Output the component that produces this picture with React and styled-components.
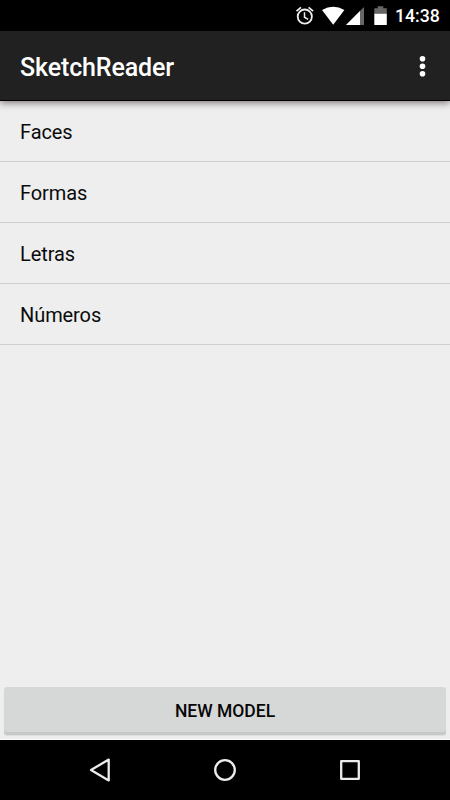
import React from "react";
import styled, { createGlobalStyle } from "styled-components";

const GlobalStyle = createGlobalStyle`
  * { box-sizing: border-box; }
  body { margin: 0; background: #eee; }
`;

const Screen = styled.div`
  display: flex;
  flex-direction: column;
  width: 450px;
  height: 800px;
  overflow: hidden;
  background: #eeeeee;
  color: #0b0b0b;
  font-family: Roboto, "Noto Sans", sans-serif;
`;

const StatusBar = styled.header`
  display: flex;
  justify-content: flex-end;
  flex: 0 0 31px;
  background: #000;
  color: #fff;
`;

const StatusIcons = styled.svg`
  display: block;
  width: 100px;
  height: 31px;
`;

const Clock = styled.time`
  width: 55px;
  padding-top: 1px;
  font-size: 17.7px;
  font-weight: 500;
  line-height: 30px;
  white-space: nowrap;
`;

const AppBar = styled.div`
  z-index: 1;
  display: flex;
  align-items: center;
  justify-content: space-between;
  flex: 0 0 70px;
  padding: 2px 20px 0;
  background: #212121;
  border-bottom: 1px solid #000;
  box-shadow: 0 2px 7px rgba(20, 0, 15, 0.5);
  color: #fff;
`;

const Title = styled.h1`
  margin: 0;
  padding-top: 2px;
  font-size: 25px;
  font-weight: 500;
  letter-spacing: -0.12px;
  line-height: 32px;
`;

const MenuButton = styled.button`
  display: flex;
  width: 15px;
  height: 24px;
  padding: 0;
  border: 0;
  background: none;
`;

const List = styled.ul`
  flex: 1;
  margin: 0;
  padding: 0;
  list-style: none;
`;

const ListItem = styled.li`
  height: 61px;
  padding: 1px 20px 0;
  border-bottom: 1px solid #cfcfcf;
  font-size: 20px;
  letter-spacing: -0.08px;
  line-height: 60px;
`;

const Footer = styled.div`
  flex: 0 0 53px;
  padding: 0 4px;
  border-bottom: 1px solid #fafafa;
`;

const ModelButton = styled.button`
  display: block;
  width: 442px;
  height: 45px;
  padding: 3px 0 0;
  border: 0;
  border-radius: 3px;
  background: #d6d8d7;
  box-shadow: 0 3px 0 #c7c9c8, 0 4px 1px #dddddd;
  color: #060606;
  font: 500 17.5px/42px Roboto, sans-serif;
`;

const NavigationBar = styled.nav`
  display: flex;
  align-items: center;
  justify-content: center;
  gap: 95px;
  flex: 0 0 60px;
  background: #000;
`;

const NavIcon = styled.svg`
  display: block;
  width: 30px;
  height: 30px;
  fill: none;
  stroke: #ececec;
  stroke-width: 2.3;
  stroke-linejoin: round;
`;

const models = ["Faces", "Formas", "Letras", "Números"];

export default function App() {
  return (
    <>
      <GlobalStyle />
      <Screen>
        <StatusBar>
          <StatusIcons viewBox="295 0 100 31" aria-hidden="true">
            <g fill="none" stroke="#eee" strokeWidth="1.8">
              <circle cx="304.8" cy="16.6" r="7.1" />
              <path d="M296.5 11.1 301 7.4M308.6 7.4l4.5 3.7" />
              <path d="M304.5 12.2v5l3.7 2.2" strokeWidth="1.5" />
            </g>
            <path d="M322 10.1Q333.2 3.6 344.4 10.1L333.2 24.8Z" fill="#fff" />
            <path d="M364 7v18h-18Z" fill="#666" />
            <path d="M360 11v14h-14Z" fill="#fff" />
            <path d="M374.3 8.2h3.4V6.3h5.6v1.9h3.5v5.7h-12.5Z" fill="#666" />
            <path d="M374.3 13.8h12.5V25h-12.5Z" fill="#fff" />
          </StatusIcons>
          <Clock>14:38</Clock>
        </StatusBar>
        <AppBar>
          <Title>SketchReader</Title>
          <MenuButton aria-label="More options">
            <svg width="15" height="24" viewBox="0 0 15 24" fill="#fff">
              <circle cx="7.5" cy="3.7" r="2.8" />
              <circle cx="7.5" cy="11.2" r="2.8" />
              <circle cx="7.5" cy="18.8" r="2.8" />
            </svg>
          </MenuButton>
        </AppBar>
        <List>
          {models.map((name) => <ListItem key={name}>{name}</ListItem>)}
        </List>
        <Footer><ModelButton>NEW MODEL</ModelButton></Footer>
        <NavigationBar>
          <NavIcon viewBox="0 0 30 30" aria-label="Back"><path d="M23.7 4.6v20.8L6 15Z" /></NavIcon>
          <NavIcon viewBox="0 0 30 30" aria-label="Home"><circle cx="15" cy="15" r="9.8" /></NavIcon>
          <NavIcon viewBox="0 0 30 30" aria-label="Recent apps"><path d="M6.2 6.2h17.6v17.6H6.2Z" /></NavIcon>
        </NavigationBar>
      </Screen>
    </>
  );
}
